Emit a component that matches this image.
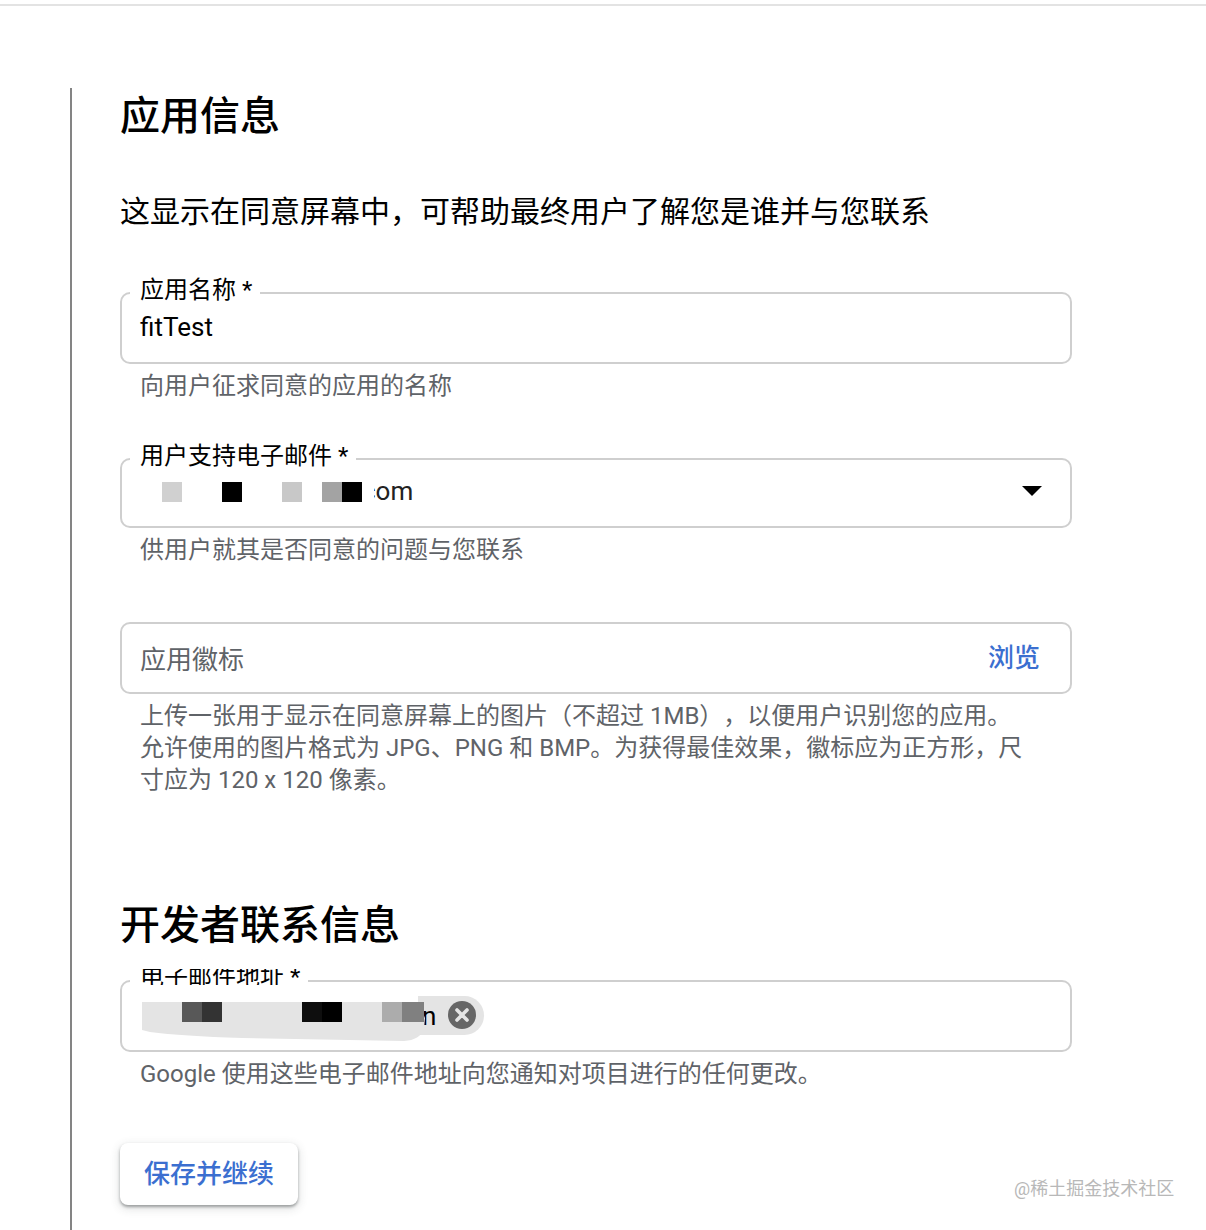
<div class="page">
  <div class="topline"></div>
  <main class="content">
    <h1 class="first">应用信息</h1>
    <p class="sub">这显示在同意屏幕中，可帮助最终用户了解您是谁并与您联系</p>

    <div class="field name">
      <span class="label">应用名称 *</span>
      <span class="value">fitTest</span>
    </div>
    <p class="help">向用户征求同意的应用的名称</p>

    <div class="field support">
      <span class="label">用户支持电子邮件 *</span>
      <span class="value masked">com</span>
      <i class="cover"></i>
      <i class="sq s1"></i><i class="sq s2"></i><i class="sq s3"></i><i class="sq s4"></i><i class="sq s5"></i>
      <svg class="caret" width="20" height="10" viewBox="0 0 20 10"><path d="M0 0h20L10 10z" fill="#000"/></svg>
    </div>
    <p class="help">供用户就其是否同意的问题与您联系</p>

    <div class="field logo">
      <span class="value placeholder">应用徽标</span>
      <span class="browse">浏览</span>
    </div>
    <p class="help multi">上传一张用于显示在同意屏幕上的图片（不超过 1MB），以便用户识别您的应用。<br />允许使用的图片格式为 JPG、PNG 和 BMP。为获得最佳效果，徽标应为正方形，尺<br />寸应为 120 x 120 像素。</p>

    <h1 class="second">开发者联系信息</h1>
    <div class="field dev">
      <span class="label clipped"><span>电子邮件地址 *</span></span>
      <span class="chip">
        <span class="chip-text">n</span>
        <svg class="close" width="28" height="28" viewBox="0 0 28 28"><circle cx="14" cy="14" r="14" fill="#666"/><path d="M9 9l10 10M19 9L9 19" stroke="#e4e4e4" stroke-width="3.6" stroke-linecap="round"/></svg>
      </span>
      <svg class="smear" width="284" height="40" viewBox="0 0 284 40"><path d="M0 0H276L283 16L282 27Q278 38 262 39L100 36Q40 34 8 30L0 28z" fill="#e4e4e4"/></svg>
      <i class="sq d1"></i><i class="sq d2"></i><i class="sq d3"></i><i class="sq d4"></i><i class="sq d5"></i><i class="sq d6"></i>
    </div>
    <p class="help">Google 使用这些电子邮件地址向您通知对项目进行的任何更改。</p>

    <button class="save">保存并继续</button>
  </main>
  <div class="mark">@稀土掘金技术社区</div>
</div>

<style>
  :global(body) { margin: 0; background: #fff; }
  .page {
    position: relative;
    width: 1206px;
    height: 1230px;
    overflow: hidden;
    background: #fff;
    font-family: Roboto, "Noto Sans CJK SC", sans-serif;
    color: #000;
    text-spacing-trim: space-all;
  }
  .topline { height: 2px; margin-top: 4px; background: #e3e3e3; }
  .content {
    margin: 82px 0 0 70px;
    width: 1002px;
    height: 1142px;
    box-sizing: border-box;
    border-left: 2px solid #848484;
    padding-left: 48px;
  }
  h1 { margin: 0; font-size: 40px; font-weight: 500; line-height: 56px; }
  .first { padding-top: 1px; }
  .sub { margin: 45px 0 0; font-size: 30px; line-height: 44px; }
  .field {
    position: relative;
    box-sizing: border-box;
    border: 2px solid #cfcfcf;
    border-radius: 10px;
    display: flex;
    align-items: center;
    padding: 0 18px;
  }
  .name { height: 72px; margin-top: 58px; }
  .support { height: 70px; margin-top: 56px; }
  .logo { height: 72px; margin-top: 56px; justify-content: space-between; padding-right: 30px; }
  .dev { height: 72px; margin-top: 26px; }
  .label {
    position: absolute;
    left: 8px;
    top: -20px;
    padding: 0 8px 0 10px;
    height: 32px;
    line-height: 32px;
    background: #fff;
    font-size: 24px;
    color: #000;
    white-space: nowrap;
  }
  .clipped { top: -13px; height: 16px; overflow: hidden; }
  .clipped span { display: block; margin-top: -8px; }
  .value { font-size: 26px; line-height: 34px; }
  .name .value { margin-top: -2px; }
  .masked { padding-left: 222px; margin-top: -4px; color: #222; }
  .cover { position: absolute; left: 220px; top: 18px; width: 32px; height: 28px; background: #fff; }
  .placeholder { font-size: 26px; color: #5f6368; margin-top: 4px; }
  .browse { font-size: 26px; color: #3b6fd0; font-weight: 500; margin-top: -6px; }
  .sq { position: absolute; width: 20px; height: 20px; top: 22px; }
  .s1 { left: 40px; background: #d0d0d0; }
  .s2 { left: 100px; background: #000; }
  .s3 { left: 160px; background: #c8c8c8; }
  .s4 { left: 200px; background: #a3a3a3; }
  .s5 { left: 220px; background: #000; }
  .caret { position: absolute; right: 28px; top: 26px; }
  .help { margin: 6px 0 0 20px; font-size: 24px; line-height: 32px; color: #5f6368; width: 900px; }
  .multi { margin-top: 6px; }
  .second { margin-top: 102px; }
  .chip {
    position: absolute;
    left: 296px;
    top: 14px;
    width: 66px;
    height: 39px;
    border-radius: 0 20px 20px 0;
    background: #e4e4e4;
  }
  .chip-text { position: absolute; left: 4px; top: 3px; font-size: 26px; line-height: 34px; }
  .close { position: absolute; left: 30px; top: 5px; }
  .smear { position: absolute; left: 20px; top: 20px; }
  .d1 { left: 60px; top: 20px; background: #585858; }
  .d2 { left: 80px; top: 20px; background: #333; }
  .d3 { left: 180px; top: 20px; background: #0e0e0e; }
  .d4 { left: 200px; top: 20px; background: #000; }
  .d5 { left: 260px; top: 20px; background: #acacac; }
  .d6 { left: 280px; top: 20px; width: 22px; background: #808080; }
  .save {
    display: block;
    margin-top: 53px;
    width: 178px;
    height: 62px;
    border: 0;
    border-radius: 8px;
    background: #fff;
    box-shadow: 0 2px 3px rgba(60,64,67,.45), 0 3px 8px 2px rgba(60,64,67,.12);
    font: 500 26px Roboto, "Noto Sans CJK SC", sans-serif;
    color: #3b6fd0;
    padding: 0 0 6px;
  }
  .mark {
    position: absolute;
    left: 1014px;
    top: 1175px;
    font-size: 18px;
    line-height: 28px;
    color: #b8b8b8;
    white-space: nowrap;
  }
</style>
